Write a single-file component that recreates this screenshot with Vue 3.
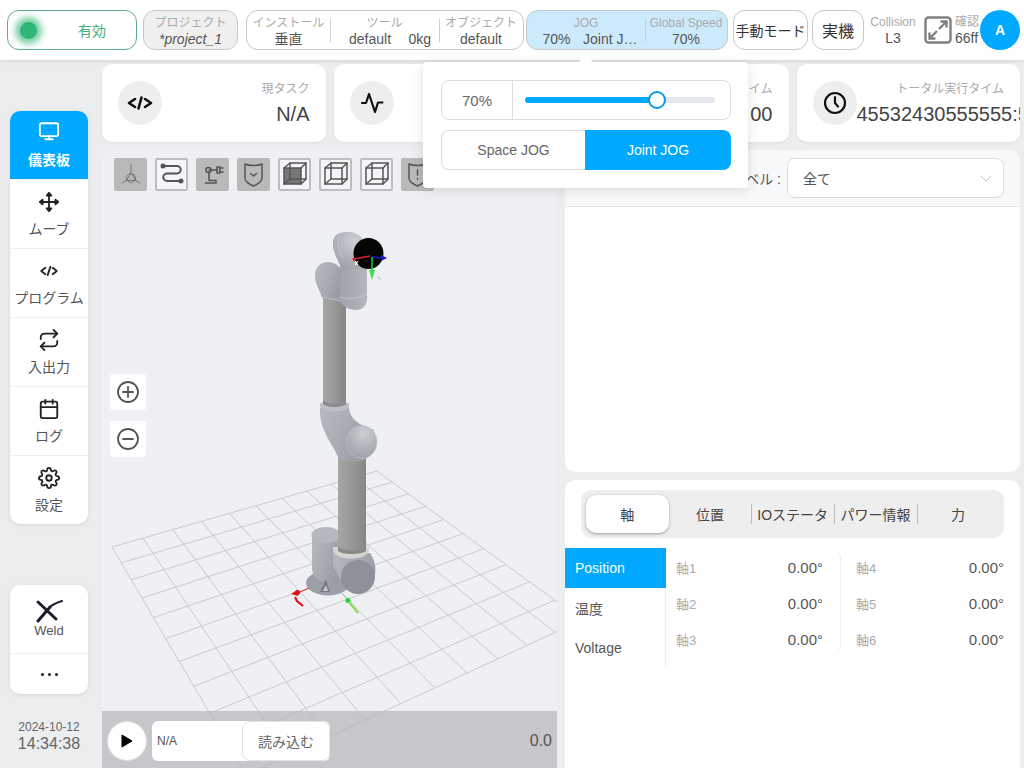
<template>
  <div class="page">
    <header class="topbar">
      <div class="status-pill">
        <span class="status-dot"></span>
        <span class="status-text">有効</span>
      </div>

      <div class="pill project-pill">
        <span class="pill-label">プロジェクト</span>
        <em class="pill-value">*project_1</em>
      </div>

      <div class="pill group-pill install-pill">
        <div class="cell cell-install">
          <span class="pill-label">インストール</span>
          <span class="pill-value">垂直</span>
        </div>
        <div class="cell cell-tool">
          <span class="pill-label">ツール</span>
          <span class="pill-value tool-value"><span>default</span><span>0kg</span></span>
        </div>
        <div class="cell cell-object">
          <span class="pill-label">オブジェクト</span>
          <span class="pill-value">default</span>
        </div>
      </div>

      <div class="pill group-pill jog-pill">
        <div class="cell cell-jog">
          <span class="pill-label">JOG</span>
          <span class="pill-value tool-value"><span>70%</span><span>Joint J…</span></span>
        </div>
        <div class="cell cell-speed">
          <span class="pill-label">Global Speed</span>
          <span class="pill-value">70%</span>
        </div>
      </div>

      <button type="button" class="mode-btn manual-btn">手動モード</button>
      <button type="button" class="mode-btn real-btn">実機</button>

      <div class="collision">
        <span>Collision</span>
        <strong>L3</strong>
      </div>

      <svg class="expand-icon" viewBox="0 0 28 28" fill="none" stroke="#808080" stroke-width="2.4">
        <rect x="1.5" y="1.5" width="25" height="25" rx="3" />
        <path d="M15 13 L22 6 M16.5 5.5 H22.5 V11.5" />
        <path d="M13 15 L6 22 M5.5 16.5 V22.5 H11.5" />
      </svg>
      <div class="confirm">
        <span>確認</span>
        <span class="confirm-value">66ff</span>
      </div>
      <div class="avatar">A</div>
    </header>

    <div class="main">
      <aside class="sidebar">
        <nav class="side-card">
          <div
            v-for="item in navItems"
            :key="item.label"
            class="side-item"
            :class="{ active: item.active }"
          >
            <svg
              class="side-icon"
              viewBox="0 0 24 24"
              :fill="item.solid ? 'currentColor' : 'none'"
              stroke="currentColor"
              stroke-width="2"
              stroke-linecap="round"
              stroke-linejoin="round"
            >
              <path v-for="d in item.paths" :key="d" :d="d" />
              <circle v-if="item.gear" cx="12" cy="12" r="3" />
            </svg>
            <span>{{ item.label }}</span>
          </div>
        </nav>

        <div class="side-card weld-card">
          <div class="side-item weld-item">
            <svg class="weld-icon" viewBox="0 0 28 24" fill="none" stroke="#1c1c2c" stroke-linecap="round">
              <path d="M3 3 L21 20" stroke-width="3" />
              <path d="M3 22 L15 8" stroke-width="3" />
              <path d="M15 8 C18 5 22 3.500 27 2" stroke-width="2" />
            </svg>
            <span>Weld</span>
          </div>
          <div class="more-item">
            <i></i><i></i><i></i>
          </div>
        </div>

        <div class="clock">
          <span class="clock-date">2024-10-12</span>
          <span class="clock-time">14:34:38</span>
        </div>
      </aside>

      <div class="content">
        <section class="stat-row">
          <div class="stat-card">
            <div class="stat-icon">
              <svg viewBox="0 0 26 24" fill="none" stroke="#111" stroke-width="2.6" stroke-linecap="round" stroke-linejoin="round">
                <path d="M8 8 L2 12 L8 16 M18 8 L24 12 L18 16 M14.500 6.500 L11.500 17.500" />
              </svg>
            </div>
            <div class="stat-text">
              <span class="stat-label">現タスク</span>
              <span class="stat-value">N/A</span>
            </div>
          </div>
          <div class="stat-card">
            <div class="stat-icon">
              <svg viewBox="0 0 24 24" fill="none" stroke="#111" stroke-width="2.2" stroke-linecap="round" stroke-linejoin="round">
                <path d="M2 12 H6 L9 3 L15 21 L18 11.500 H22.500" />
              </svg>
            </div>
            <div class="stat-text">
              <span class="stat-label">状態</span>
              <span class="stat-value">N/A</span>
            </div>
          </div>
          <div class="stat-card">
            <div class="stat-icon"></div>
            <div class="stat-text">
              <span class="stat-label">実行タイム</span>
              <span class="stat-value">00</span>
            </div>
          </div>
          <div class="stat-card total-card">
            <div class="stat-icon">
              <svg viewBox="0 0 24 24" fill="none" stroke="#111" stroke-width="2.2" stroke-linecap="round" stroke-linejoin="round">
                <circle cx="12" cy="12" r="10" />
                <path d="M12 6 V12 L15 15.5" />
              </svg>
            </div>
            <div class="stat-text">
              <span class="stat-label">トータル実行タイム</span>
              <span class="stat-value">45532430555555:55:55</span>
            </div>
          </div>
        </section>

        <section class="panels">
          <div class="viewer">
            <svg class="scene" viewBox="102 150 456 618">
              <defs>
                <linearGradient id="tube" x1="0" x2="1" y1="0" y2="0">
                  <stop offset="0" stop-color="#a6a6a6" />
                  <stop offset="0.5" stop-color="#989898" />
                  <stop offset="1" stop-color="#858585" />
                </linearGradient>
                <linearGradient id="metal" x1="0" x2="1" y1="0" y2="0.5">
                  <stop offset="0" stop-color="#b6bac0" />
                  <stop offset="0.5" stop-color="#a9adb4" />
                  <stop offset="1" stop-color="#979ca4" />
                </linearGradient>
                <linearGradient id="wrist" x1="0" x2="1" y1="0" y2="0">
                  <stop offset="0" stop-color="#a0a4aa" />
                  <stop offset="1" stop-color="#b3b6bb" />
                </linearGradient>
                <radialGradient id="cap" cx="0.55" cy="0.25" r="0.85">
                  <stop offset="0" stop-color="#cdd0d4" />
                  <stop offset="0.55" stop-color="#aeb2b8" />
                  <stop offset="1" stop-color="#989da5" />
                </radialGradient>
              </defs>

              <g stroke="#c9cacc" stroke-width="1" fill="none">
                <line
                  v-for="(l, i) in gridLines"
                  :key="i"
                  :x1="l.x1"
                  :y1="l.y1"
                  :x2="l.x2"
                  :y2="l.y2"
                />
              </g>

              <!-- base -->
              <ellipse cx="328" cy="583" rx="22" ry="12.500" fill="#9ba0a8" />
              <path d="M312 535 V570 C314 582 330 586 342 582 L342 535 Z" fill="url(#metal)" />
              <ellipse cx="326" cy="535" rx="14.500" ry="8" fill="#b5b9bf" />
              <path d="M320 592 L326 579 L330 592 Z" fill="#777c84" />
              <path d="M323 591 L326 585 L328 591 Z" fill="#c4c7cb" />
              <path d="M333 553 L370 553 C375 560 376 568 375 574 L352 592 C345 586 336 575 333 565 Z" fill="url(#metal)" />
              <ellipse cx="358" cy="577" rx="17" ry="17" fill="#8d929a" />
              <path d="M333 547 V551 C337 561 365 561 369 551 V547 Z" fill="#d5d5d1" />
              <rect x="338" y="455" width="28" height="96" fill="url(#tube)" />
              <path d="M338 546 C342 552 362 552 366 546 V551 C362 555 342 555 338 551 Z" fill="#8a8a8a" />

              <!-- elbow -->
              <path d="M320 408 C319 420 324 432 330 442 C334 449 336 452 337 455 C342 463 360 464 367 458 L374 430 L362 425 C354 421 350 416 349 408 Z" fill="url(#metal)" />
              <ellipse cx="362" cy="442" rx="15" ry="16.500" fill="url(#cap)" stroke="#c6c9cd" stroke-width="0.6" />
              <path d="M320 403 V407 C324 413 345 413 349 407 V403 Z" fill="#bcbfc4" />
              <rect x="323" y="296" width="23" height="108" fill="url(#tube)" />
              <path d="M323 400 C327 405 342 405 346 400 V404 C342 408 327 408 323 404 Z" fill="#8b8b8b" />

              <!-- shoulder and wrist -->
              <path d="M322 298 C320 290 315 285 315 275 C315 266 322 262 328 262 C334 262 340 266 343 272 L343 302 Z" fill="url(#metal)" />
              <path d="M322 297 L342 301" stroke="#c9ccd0" stroke-width="0.7" />
              <path d="M340 262 V300 C342 307 350 310 356 310 C362 310 366 306 367 300 V262 Z" fill="url(#wrist)" />
              <path d="M340 297 C348 300 358 298 367 295" stroke="#c9ccd0" stroke-width="0.7" fill="none" />
              <path d="M333 245 C332 236 338 232 346 232 C352 232 358 233 362 238 L372 266 L342 270 C338 260 333 252 333 245 Z" fill="url(#cap)" />
              <path d="M339 236 C337 244 339 252 343 258" stroke="#c8cbcf" stroke-width="0.7" fill="none" />
              <ellipse cx="368.500" cy="253.500" rx="15" ry="15.500" fill="#050505" />

              <!-- flange axes -->
              <path d="M354 259 L370 256" stroke="#e0202a" stroke-width="1.6" />
              <path d="M357 258 L354 262 L352 258 Z" fill="#e0202a" />
              <path d="M355 261 L358 265 M358 261 L355 265" stroke="#fff" stroke-width="1.2" />
              <path d="M372 257 L383 258" stroke="#1414d8" stroke-width="1.6" />
              <path d="M381 255 L387 258 L381 261 Z" fill="#1414d8" />
              <path d="M372 257 V272" stroke="#18c02e" stroke-width="1.6" />
              <path d="M369 270 H375 L372 280 Z" fill="#3be04c" />
              <path d="M377 277 L381 279 L377 276.500" stroke="#c8cacd" stroke-width="1" fill="none" />

              <!-- base axes -->
              <path d="M296 594 L309 588" stroke="#e02028" stroke-width="1" />
              <circle cx="297.500" cy="592.500" r="2.500" fill="#e01018" />
              <path d="M291 594 L297 590 L298 596 Z" fill="#e01018" />
              <path d="M295 597 L297 601 L303 606" stroke="#e01018" stroke-width="2.200" fill="none" />
              <path d="M342 593 L347 599" stroke="#7ac47c" stroke-width="0.8" />
              <circle cx="348" cy="600.500" r="2.500" fill="#1fd53a" />
              <path d="M349 602 L358 613" stroke="#8fdc60" stroke-width="2.400" />
            </svg>

            <div class="view-tools">
              <button
                v-for="tool in viewTools"
                :key="tool.id"
                type="button"
                class="tool-btn"
                :class="{ on: tool.on }"
              >
                <svg
                  viewBox="0 0 33 33"
                  fill="none"
                  :stroke="tool.color || '#555'"
                  :stroke-width="tool.w || 1.5"
                  stroke-linecap="round"
                  stroke-linejoin="round"
                >
                  <path v-if="tool.fill" :d="tool.fill" fill="#777" stroke="none" />
                  <path v-for="d in tool.paths" :key="d" :d="d" />
                  <circle v-for="c in tool.dots" :key="c[0]" :cx="c[0]" :cy="c[1]" :r="c[2]" :fill="c[3] ? '#555' : 'none'" />
                </svg>
              </button>
            </div>

            <div class="zoom-tools">
              <button type="button" class="zoom-btn">
                <svg viewBox="0 0 24 24" fill="none" stroke="#555" stroke-width="1.800" stroke-linecap="round">
                  <circle cx="12" cy="12" r="10" />
                  <path d="M12 7 V17 M7 12 H17" />
                </svg>
              </button>
              <button type="button" class="zoom-btn">
                <svg viewBox="0 0 24 24" fill="none" stroke="#555" stroke-width="1.800" stroke-linecap="round">
                  <circle cx="12" cy="12" r="10" />
                  <path d="M7 12 H17" />
                </svg>
              </button>
            </div>

            <div class="play-bar">
              <button type="button" class="play-btn">
                <svg viewBox="0 0 12 14"><path d="M1 1 L11 7 L1 13 Z" fill="#000" stroke="#000" stroke-linejoin="round" /></svg>
              </button>
              <div class="load-box">
                <span>N/A</span>
                <button type="button" class="load-btn">読み込む</button>
              </div>
              <span class="play-value">0.0</span>
            </div>
          </div>

          <div class="right-col">
            <div class="log-panel">
              <div class="log-head">
                <span class="log-label">ログレベル :</span>
                <div class="log-select">
                  <span>全て</span>
                  <svg viewBox="0 0 12 7" fill="none" stroke="#c4c4c4" stroke-width="1">
                    <path d="M1 1 L6 6 L11 1" />
                  </svg>
                </div>
              </div>
            </div>

            <div class="data-panel">
              <div class="tabs">
                <div
                  v-for="(tab, i) in tabs"
                  :key="tab"
                  class="tab"
                  :class="{ active: i === 0, split: i > 1 }"
                >
                  {{ tab }}
                </div>
              </div>
              <div class="data-body">
                <ul class="data-menu">
                  <li class="active">Position</li>
                  <li>温度</li>
                  <li>Voltage</li>
                </ul>
                <div class="axis-col first">
                  <div v-for="row in axes.slice(0, 3)" :key="row" class="axis-row">
                    <span class="axis-name">{{ row }}</span>
                    <span class="axis-value">0.00°</span>
                  </div>
                </div>
                <div class="axis-col">
                  <div v-for="row in axes.slice(3)" :key="row" class="axis-row">
                    <span class="axis-name">{{ row }}</span>
                    <span class="axis-value">0.00°</span>
                  </div>
                </div>
              </div>
            </div>
          </div>
        </section>
      </div>
    </div>

    <!-- JOG popover -->
    <div class="jog-pop">
      <span class="jog-arrow"></span>
      <div class="speed-box">
        <span class="speed-num">70%</span>
        <div class="speed-slider">
          <div class="track">
            <div class="fill" :style="{ width: speed + '%' }"></div>
            <span class="knob" :style="{ left: speed + '%' }"></span>
          </div>
        </div>
      </div>
      <div class="jog-switch">
        <button type="button">Space JOG</button>
        <button type="button" class="active">Joint JOG</button>
      </div>
    </div>
  </div>
</template>

<script setup>
const speed = 69.5

const navItems = [
  { label: '儀表板', active: true, paths: ['M4 3.500h16a2 2 0 0 1 2 2v10a2 2 0 0 1-2 2H4a2 2 0 0 1-2-2v-10a2 2 0 0 1 2-2z', 'M8 21h8', 'M12 17.500V21'] },
  { label: 'ムーブ', solid: true, paths: ['M12 4v16', 'M4 12h16', 'M9.500 5L12 2l2.500 3z', 'M9.500 19L12 22l2.500-3z', 'M5 9.500L2 12l3 2.500z', 'M19 9.500L22 12l-3 2.500z'] },
  { label: 'プログラム', paths: ['M8 8.500L3.500 12 8 15.500', 'M16 8.500l4.500 3.500L16 15.500', 'M13.500 7.500l-3 9'] },
  { label: '入出力', paths: ['M17 1l4 4-4 4', 'M3 11V9a4 4 0 0 1 4-4h14', 'M7 23l-4-4 4-4', 'M21 13v2a4 4 0 0 1-4 4H3'] },
  { label: 'ログ', paths: ['M5 4h14a2 2 0 0 1 2 2v14a2 2 0 0 1-2 2H5a2 2 0 0 1-2-2V6a2 2 0 0 1 2-2z', 'M16 2v4', 'M8 2v4', 'M3 10h18'] },
  {
    label: '設定',
    gear: true,
    paths: ['M19.4 15a1.65 1.65 0 0 0 .33 1.82l.06.06a2 2 0 0 1 0 2.83 2 2 0 0 1-2.83 0l-.06-.06a1.65 1.65 0 0 0-1.82-.33 1.65 1.65 0 0 0-1 1.51V21a2 2 0 0 1-2 2 2 2 0 0 1-2-2v-.09A1.65 1.65 0 0 0 9 19.4a1.65 1.65 0 0 0-1.82.33l-.06.06a2 2 0 0 1-2.83 0 2 2 0 0 1 0-2.83l.06-.06a1.65 1.65 0 0 0 .33-1.82 1.65 1.65 0 0 0-1.51-1H3a2 2 0 0 1-2-2 2 2 0 0 1 2-2h.09A1.65 1.65 0 0 0 4.600 9a1.65 1.65 0 0 0-.33-1.82l-.06-.06a2 2 0 0 1 0-2.83 2 2 0 0 1 2.83 0l.06.06a1.65 1.65 0 0 0 1.82.33H9a1.65 1.65 0 0 0 1-1.51V3a2 2 0 0 1 2-2 2 2 0 0 1 2 2v.09a1.65 1.65 0 0 0 1 1.51 1.65 1.65 0 0 0 1.82-.33l.06-.06a2 2 0 0 1 2.83 0 2 2 0 0 1 0 2.83l-.06.06a1.65 1.65 0 0 0-.33 1.82V9a1.65 1.65 0 0 0 1.51 1H21a2 2 0 0 1 2 2 2 2 0 0 1-2 2h-.09a1.65 1.65 0 0 0-1.51 1z'],
  },
]

const cubeFront = 'M6 10h17v16H6z'
const cubeBack = 'M12 5h16v16H12z'
const cubeEdges = 'M6 10L12 5M23 10L28 5M23 26L28 21M6 26L12 21'
const shield = 'M8 6C12 8 21 8 25 6V20C25 24 20 26.500 16.500 28C13 26.500 8 24 8 20Z'

const viewTools = [
  { id: 'axes', color: '#777', w: 1, paths: ['M17 6V15', 'M13 22L8 25', 'M21 22L26 25', 'M17 15L12.700 22.500H21.300Z'], dots: [[17, 20, 4.500]] },
  { id: 'path', on: true, w: 2, paths: ['M8 8H22a3.750 3.750 0 0 1 0 7.500H12a3.750 3.750 0 0 0 0 7.500H26'], dots: [[8, 8, 1.500, true], [26, 23, 1.500, true]] },
  { id: 'robot', w: 1.6, paths: ['M9.500 25H20V22.500H13V14', 'M13 12H21', 'M21 9H24V15H21Z', 'M24 10H27M24 14H27'], dots: [[12.500, 12, 2.500]] },
  { id: 'shield', paths: [shield, 'M13.500 15.500L16.500 18L19.500 15.500'] },
  { id: 'cube-1', on: true, fill: cubeFront, paths: [cubeFront, cubeBack, cubeEdges] },
  { id: 'cube-2', on: true, paths: [cubeFront, cubeBack, cubeEdges] },
  { id: 'cube-3', on: true, paths: [cubeFront, cubeBack, cubeEdges] },
  { id: 'shield-alert', paths: [shield, 'M16.500 12V17', 'M16.500 20.500V21'] },
]

const tabs = ['軸', '位置', 'IOステータ', 'パワー情報', '力']
const axes = ['軸1', '軸2', '軸3', '軸4', '軸5', '軸6']

// 床のグリッド: 四隅から射影変換で 10x10 の線を出す
const quad = [[377, 471], [582, 620], [246, 775], [112, 547]]

function makeHomography([p0, p1, p2, p3]) {
  const dx1 = p1[0] - p2[0]
  const dx2 = p3[0] - p2[0]
  const dx3 = p0[0] - p1[0] + p2[0] - p3[0]
  const dy1 = p1[1] - p2[1]
  const dy2 = p3[1] - p2[1]
  const dy3 = p0[1] - p1[1] + p2[1] - p3[1]
  const det = dx1 * dy2 - dx2 * dy1
  const g = (dx3 * dy2 - dx2 * dy3) / det
  const h = (dx1 * dy3 - dx3 * dy1) / det
  return (u, v) => {
    const w = g * u + h * v + 1
    return [
      ((p1[0] - p0[0] + g * p1[0]) * u + (p3[0] - p0[0] + h * p3[0]) * v + p0[0]) / w,
      ((p1[1] - p0[1] + g * p1[1]) * u + (p3[1] - p0[1] + h * p3[1]) * v + p0[1]) / w,
    ]
  }
}

const project = makeHomography(quad)
const gridLines = []
for (let i = 0; i <= 10; i++) {
  const t = i / 10
  const a = project(t, 0)
  const b = project(t, 1)
  const c = project(0, t)
  const d = project(1, t)
  gridLines.push({ x1: a[0], y1: a[1], x2: b[0], y2: b[1] })
  gridLines.push({ x1: c[0], y1: c[1], x2: d[0], y2: d[1] })
}
</script>

<style>
html,
body {
  margin: 0;
  background: #ebedef;
}
</style>

<style scoped>
* {
  box-sizing: border-box;
}

button {
  font: inherit;
  cursor: pointer;
}

.page {
  position: relative;
  display: flex;
  flex-direction: column;
  width: 1024px;
  height: 768px;
  overflow: hidden;
  background: #ebedef;
  color: #555;
  font-family: 'Liberation Sans', 'Noto Sans CJK JP', sans-serif;
  font-size: 14px;
}

.topbar {
  position: relative;
  z-index: 2;
  display: flex;
  align-items: center;
  flex: 0 0 60px;
  padding-left: 7px;
  background: #fff;
  box-shadow: 0 1px 4px rgba(0, 0, 0, 0.12);
}

.status-pill {
  position: relative;
  display: flex;
  align-items: center;
  justify-content: center;
  width: 130px;
  height: 40px;
  padding-left: 40px;
  border: 1px solid #5cae8a;
  border-radius: 12px;
}

.status-dot {
  position: absolute;
  left: 12px;
  top: 11px;
  width: 17px;
  height: 17px;
  border-radius: 50%;
  background: #2eb577;
  box-shadow: 0 0 6px 5px rgba(46, 181, 119, 0.65);
}

.status-text {
  color: #3fae7c;
  font-size: 14px;
}

.pill {
  display: flex;
  height: 40px;
  border: 1px solid #c8c8c8;
  border-radius: 12px;
}

.project-pill {
  flex-direction: column;
  align-items: center;
  width: 95px;
  margin-left: 6px;
  background: #f0f0f0;
}

.pill-label {
  color: #aaa;
  font-size: 12px;
  line-height: 16px;
  white-space: nowrap;
}

.pill-value {
  color: #555;
  font-size: 14px;
  line-height: 16px;
  white-space: nowrap;
}

.project-pill .pill-label {
  margin-top: 4px;
}

.group-pill {
  align-items: stretch;
}

.install-pill {
  width: 278px;
  margin-left: 8px;
}

.jog-pill {
  width: 202px;
  margin-left: 2px;
  background: #cdeafd;
}

.cell {
  position: relative;
  display: flex;
  flex-direction: column;
  align-items: center;
  padding-top: 4px;
}

.cell-tool::before,
.cell-object::before,
.cell-speed::before {
  content: '';
  position: absolute;
  left: 0;
  top: 8px;
  height: 23px;
  width: 1px;
  background: #cfcfcf;
}

.cell-install {
  width: 83px;
}

.cell-tool {
  width: 109px;
}

.cell-object {
  width: 84px;
}

.tool-value {
  display: flex;
  justify-content: space-between;
  width: 82px;
  margin-left: 11px;
}

.cell-jog {
  width: 118px;
}

.cell-jog .tool-value {
  width: 95px;
  margin-left: 8px;
}

.cell-speed {
  width: 82px;
}

.mode-btn {
  height: 40px;
  padding: 0;
  border: 1px solid #c8c8c8;
  border-radius: 12px;
  background: #fff;
  color: #333;
  white-space: nowrap;
}

.manual-btn {
  width: 75px;
  margin-left: 5px;
  font-size: 14px;
}

.real-btn {
  width: 52px;
  margin-left: 4px;
  font-size: 16px;
}

.collision {
  display: flex;
  flex-direction: column;
  align-items: center;
  width: 46px;
  margin-left: 6px;
  color: #aaa;
  font-size: 12px;
  line-height: 15px;
}

.collision strong {
  color: #555;
  font-size: 14px;
  font-weight: 400;
  line-height: 16px;
}

.expand-icon {
  width: 28px;
  height: 28px;
  margin-left: 8px;
}

.confirm {
  display: flex;
  flex-direction: column;
  width: 25px;
  margin-left: 3px;
  color: #aaa;
  font-size: 12px;
  line-height: 15px;
  white-space: nowrap;
}

.confirm-value {
  color: #555;
  font-size: 14px;
  line-height: 16px;
}

.avatar {
  display: flex;
  align-items: center;
  justify-content: center;
  width: 40px;
  height: 40px;
  border-radius: 50%;
  background: #00a8ff;
  color: #fff;
  font-size: 14px;
  font-weight: 700;
}

.main {
  display: flex;
  flex: 1;
  min-height: 0;
}

.sidebar {
  display: flex;
  flex-direction: column;
  flex: 0 0 102px;
  padding: 51px 14px 0 10px;
}

.side-card {
  display: flex;
  flex-direction: column;
  overflow: hidden;
  border-radius: 10px;
  background: #fff;
  box-shadow: 0 1px 4px rgba(0, 0, 0, 0.1);
}

.side-item {
  display: flex;
  flex-direction: column;
  align-items: center;
  height: 69px;
  padding-top: 11px;
  color: #555;
  font-size: 14px;
  line-height: 20px;
  white-space: nowrap;
}

.side-item + .side-item {
  border-top: 1px solid #eee;
}

.side-item.active {
  height: 68px;
  padding-top: 9px;
  background: #00a8ff;
  color: #fff;
  font-weight: 700;
}

.side-icon {
  flex: none;
  width: 22px;
  height: 22px;
  margin-bottom: 6px;
  color: #222;
}

.active .side-icon {
  margin-bottom: 8px;
  color: #fff;
}

.weld-card {
  margin-top: 61px;
}

.weld-item {
  height: 68px;
  padding-top: 14px;
  font-size: 13px;
  line-height: 16px;
}

.weld-icon {
  width: 28px;
  height: 24px;
}

.more-item {
  display: flex;
  align-items: center;
  justify-content: center;
  gap: 4px;
  height: 41px;
  border-top: 1px solid #eee;
}

.more-item i {
  width: 3px;
  height: 3px;
  border-radius: 50%;
  background: #222;
}

.clock {
  display: flex;
  flex-direction: column;
  align-items: center;
  margin-top: 26px;
  color: #666;
}

.clock-date {
  font-size: 12px;
  line-height: 15px;
}

.clock-time {
  font-size: 16px;
  line-height: 18px;
}

.content {
  display: flex;
  flex-direction: column;
  flex: 1;
  min-width: 0;
  gap: 8px;
  padding: 4px 4px 0 0;
}

.stat-row {
  display: grid;
  grid-template-columns: repeat(4, minmax(0, 1fr));
  gap: 8px;
  flex: 0 0 78px;
}

.stat-card {
  display: flex;
  align-items: center;
  min-width: 0;
  padding: 0 16px;
  overflow: hidden;
  border-radius: 10px;
  background: #fff;
  box-shadow: 0 1px 3px rgba(0, 0, 0, 0.06);
}

.stat-icon {
  display: flex;
  align-items: center;
  justify-content: center;
  flex: 0 0 44px;
  height: 44px;
  border-radius: 50%;
  background: #eee;
}

.stat-icon svg {
  width: 26px;
  height: 24px;
}

.stat-text {
  display: flex;
  flex-direction: column;
  align-items: flex-end;
  flex: 1;
  min-width: 0;
}

.stat-label {
  color: #aaa;
  font-size: 12px;
  line-height: 18px;
}

.stat-value {
  margin-top: 4px;
  color: #444;
  font-size: 20px;
  line-height: 24px;
  white-space: nowrap;
}

.total-card .stat-value {
  align-self: flex-start;
}

.panels {
  display: grid;
  grid-template-columns: 455px 455px;
  gap: 8px;
  flex: 1;
  min-height: 0;
}

.viewer {
  position: relative;
  overflow: hidden;
  border-radius: 10px 10px 0 0;
  background: #eef0f4;
}

.scene {
  position: absolute;
  left: 0;
  top: 0;
  width: 456px;
  height: 618px;
}

.view-tools {
  position: relative;
  display: flex;
  gap: 8px;
  padding: 8px 0 0 12px;
}

.tool-btn {
  flex: 0 0 33px;
  width: 33px;
  height: 33px;
  padding: 0;
  border: 0;
  border-radius: 2px;
  background: #b9b9b9;
}

.tool-btn.on {
  background: #f4f5f8;
  box-shadow: inset 0 0 0 2px #bdbdbd;
}

.tool-btn svg {
  display: block;
  width: 100%;
  height: 100%;
}

.zoom-tools {
  position: absolute;
  left: 8px;
  top: 224px;
  display: flex;
  flex-direction: column;
  gap: 11px;
}

.zoom-btn {
  display: flex;
  align-items: center;
  justify-content: center;
  width: 36px;
  height: 36px;
  padding: 0;
  border: 0;
  border-radius: 3px;
  background: #fff;
}

.zoom-btn svg {
  width: 24px;
  height: 24px;
}

.play-bar {
  position: absolute;
  left: 0;
  right: 0;
  bottom: 0;
  display: flex;
  align-items: center;
  height: 57px;
  padding: 2px 5px 0;
  background: rgba(180, 180, 183, 0.68);
}

.play-btn {
  display: flex;
  align-items: center;
  justify-content: center;
  flex: 0 0 40px;
  height: 40px;
  padding: 0;
  border: 1px solid #ddd;
  border-radius: 50%;
  background: #fff;
}

.play-btn svg {
  width: 12px;
  height: 14px;
}

.load-box {
  display: flex;
  align-items: center;
  justify-content: space-between;
  width: 178px;
  height: 40px;
  margin-left: 5px;
  padding-left: 5px;
  border-radius: 6px;
  background: #fff;
  color: #555;
  font-size: 12px;
}

.load-btn {
  width: 88px;
  height: 40px;
  padding: 0;
  border: 1px solid #e2e2e2;
  border-radius: 8px;
  background: #fff;
  color: #666;
  font-size: 14px;
}

.play-value {
  margin-left: auto;
  color: #555;
  font-size: 16px;
}

.right-col {
  display: flex;
  flex-direction: column;
  gap: 8px;
  min-height: 0;
}

.log-panel {
  flex: 0 0 322px;
  overflow: hidden;
  border-radius: 10px;
  background: #fff;
}

.log-head {
  display: flex;
  align-items: center;
  justify-content: flex-end;
  height: 57px;
  padding-right: 16px;
  border-bottom: 1px solid #e8e8e8;
  background: #f7f8f9;
}

.log-label {
  margin-right: 6px;
  color: #555;
}

.log-select {
  display: flex;
  align-items: center;
  justify-content: space-between;
  width: 217px;
  height: 40px;
  padding: 0 11px 0 15px;
  border: 1px solid #ddd;
  border-radius: 8px;
  background: #fff;
  color: #555;
}

.log-select svg {
  width: 12px;
  height: 7px;
}

.data-panel {
  flex: 1;
  min-height: 0;
  padding-top: 10px;
  border-radius: 10px 10px 0 0;
  background: #fff;
}

.tabs {
  display: flex;
  align-items: center;
  height: 48px;
  margin: 0 16px;
  padding: 0 3px 0 5px;
  border-radius: 10px;
  background: #eee;
}

.tab {
  position: relative;
  display: flex;
  align-items: center;
  justify-content: center;
  flex: 0 0 82.700px;
  height: 38px;
  color: #444;
  white-space: nowrap;
}

.tab.active {
  border-radius: 10px;
  background: #fff;
  box-shadow: 0 1px 3px rgba(0, 0, 0, 0.35);
}

.tab.split::before {
  content: '';
  position: absolute;
  left: 0;
  top: 9px;
  height: 20px;
  width: 1px;
  background: #bbb;
}

.data-body {
  display: flex;
  margin-top: 10px;
}

.data-menu {
  flex: 0 0 101px;
  height: 120px;
  margin: 0;
  padding: 0;
  border-right: 1px solid #eee;
  list-style: none;
}

.data-menu li {
  display: flex;
  align-items: center;
  height: 40px;
  padding-left: 10px;
  color: #555;
}

.data-menu li.active {
  margin-right: -1px;
  background: #00a8ff;
  color: #fff;
}

.axis-col {
  flex: 0 0 174px;
  height: 108px;
  padding: 1px 17px 0 10px;
  border-radius: 0 10px 10px 0;
}

.axis-col.first {
  flex-basis: 175px;
  border-right: 1px solid #f0f0f0;
}

.axis-col:last-child {
  flex-basis: 180px;
  padding: 1px 17px 0 15px;
  border: 0;
}

.axis-row {
  display: flex;
  align-items: center;
  justify-content: space-between;
  height: 36px;
}

.axis-name {
  color: #aaa;
  font-size: 13px;
}

.axis-value {
  color: #555;
  font-size: 15px;
}

.jog-pop {
  position: absolute;
  z-index: 3;
  left: 423px;
  top: 62px;
  width: 325px;
  height: 126px;
  padding: 18px 17px 0 18px;
  border-radius: 4px;
  background: #fff;
  box-shadow: 0 2px 12px rgba(0, 0, 0, 0.12);
}

.jog-arrow {
  position: absolute;
  left: 158px;
  top: -5px;
  width: 10px;
  height: 10px;
  background: #fff;
  transform: rotate(45deg);
}

.speed-box {
  display: flex;
  height: 40px;
  border: 1px solid #ddd;
  border-radius: 8px;
}

.speed-num {
  display: flex;
  align-items: center;
  justify-content: center;
  flex: 0 0 71px;
  border-right: 1px solid #ddd;
  color: #666;
  font-size: 15px;
}

.speed-slider {
  display: flex;
  align-items: center;
  flex: 1;
  padding: 0 15px 0 12px;
}

.track {
  position: relative;
  width: 100%;
  height: 6px;
  border-radius: 3px;
  background: #e4e7ed;
}

.fill {
  height: 100%;
  border-radius: 3px;
  background: #00a8ff;
}

.knob {
  position: absolute;
  top: -6px;
  width: 18px;
  height: 18px;
  margin-left: -9px;
  border: 2px solid #0a9ae8;
  border-radius: 50%;
  background: #fff;
}

.jog-switch {
  display: flex;
  height: 40px;
  margin-top: 10px;
}

.jog-switch button {
  flex: 0 0 144px;
  padding: 0;
  border: 1px solid #ddd;
  border-right: 0;
  border-radius: 8px 0 0 8px;
  background: #fff;
  color: #666;
  font-size: 14px;
}

.jog-switch button.active {
  flex: 0 0 146px;
  border: 0;
  border-radius: 0 8px 8px 0;
  background: #00a8ff;
  color: #fff;
}
</style>
